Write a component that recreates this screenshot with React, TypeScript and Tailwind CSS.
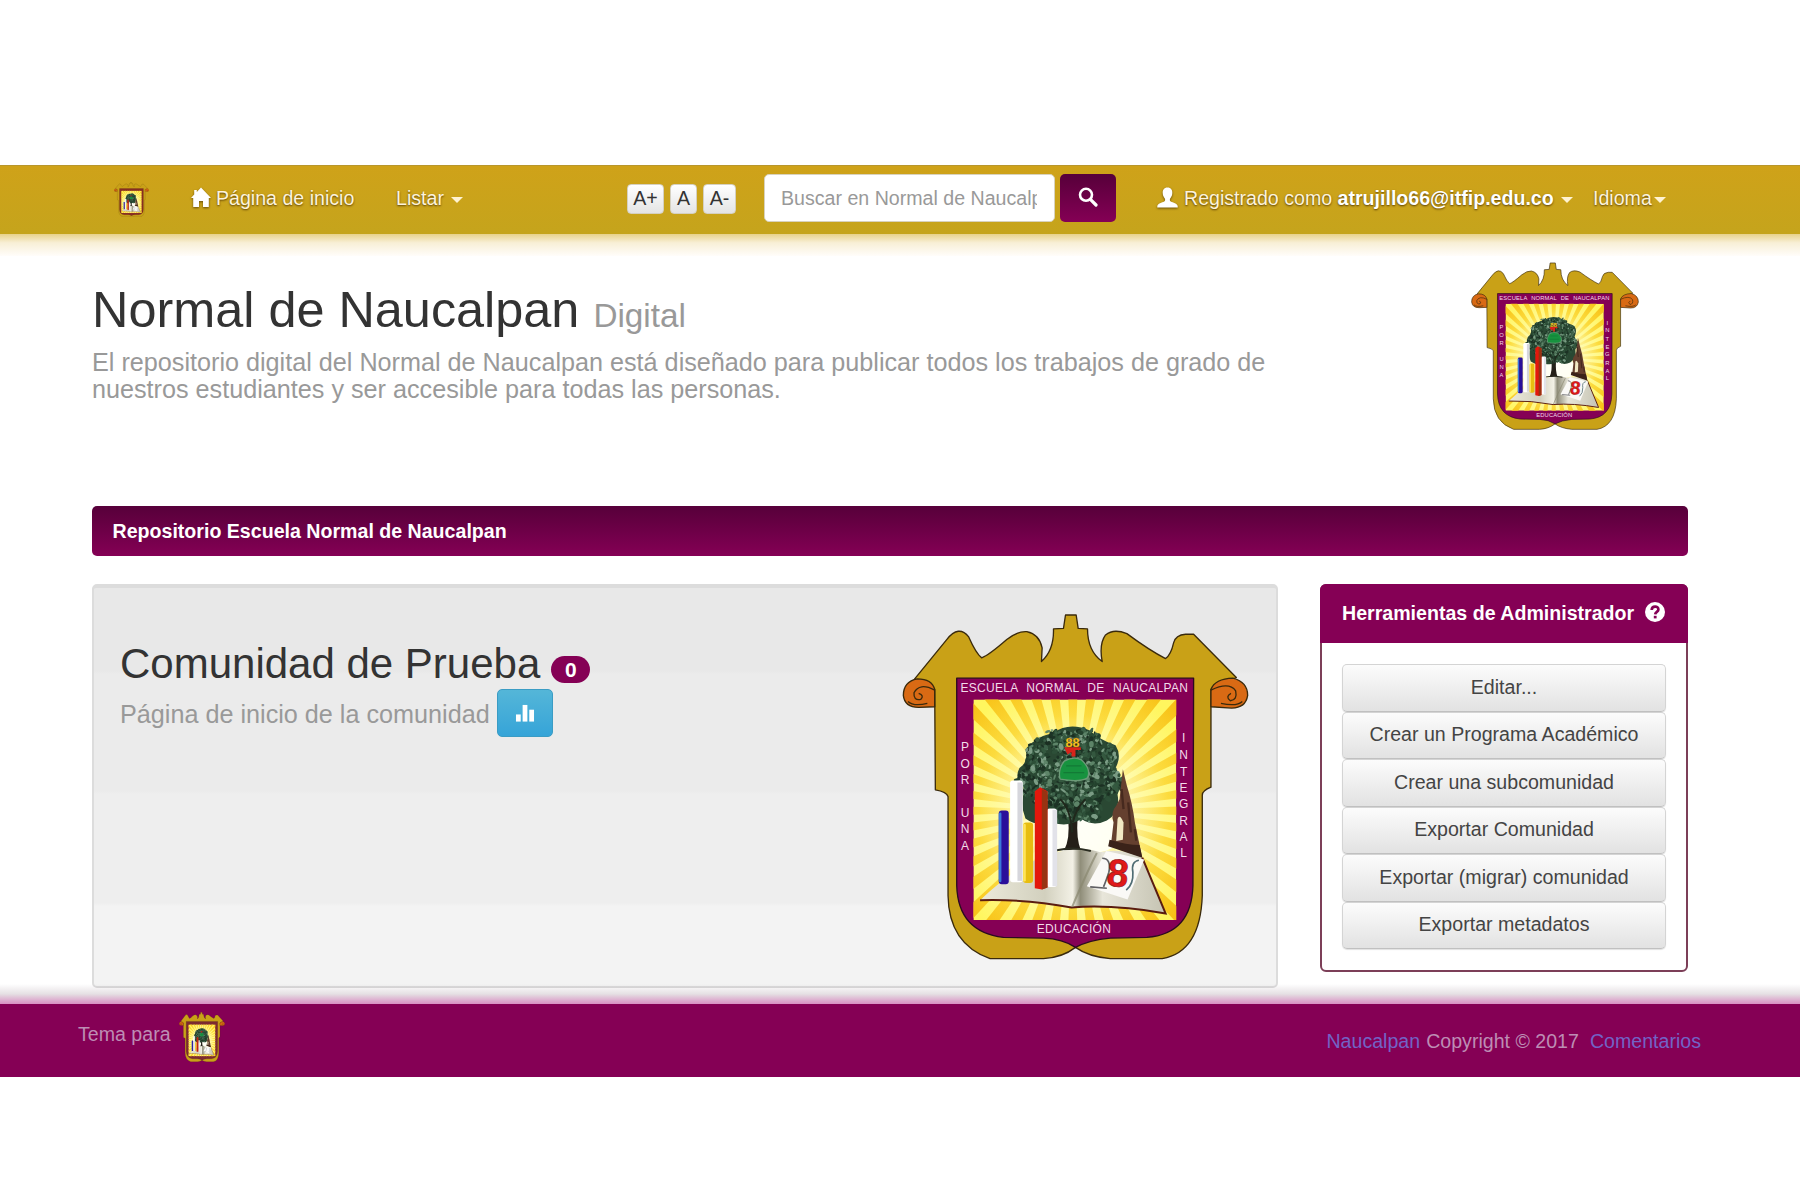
import React, { useId } from "react";

const rays = Array.from({ length: 40 }, (_, i) => {
  const a = (i * 9 * Math.PI) / 180;
  const w = 0.04;
  const r = 620;
  const p = (t: number) => `${(578 + r * Math.cos(t)).toFixed(1)},${(665 + r * Math.sin(t)).toFixed(1)}`;
  return `578,665 ${p(a - w)} ${p(a + w)}`;
});

let seed = 20177;
const rand = () => {
  seed = (seed * 48271) % 2147483647;
  return seed / 2147483647;
};

const leafTones = ["#23412d", "#3c6149", "#1d3326", "#5d8468", "#2d4f38", "#7b9c85", "#1b2f22", "#34583f"];
const leaves = Array.from({ length: 900 }, () => {
  const a = rand() * Math.PI * 2;
  const r = Math.sqrt(rand());
  return {
    x: 568 + Math.cos(a) * r * (150 + 14 * Math.sin(a * 7)),
    y: 558 + Math.sin(a) * r * (142 + 12 * Math.cos(a * 6)),
    rx: 3 + rand() * 8,
    ry: 2.5 + rand() * 5,
    t: rand() * 180,
    c: leafTones[Math.floor(rand() * leafTones.length)],
  };
});

function Column({ letters, x, ys }: { letters: string; x: number; ys: number[] }) {
  return (
    <>
      {letters.split("").map((l, i) => (
        <text key={i} x={x} y={ys[i]} textAnchor="middle">
          {l}
        </text>
      ))}
    </>
  );
}

function Crest({ className, frame = "#850055", lettering = true }: { className: string; frame?: string; lettering?: boolean }) {
  const id = useId().replace(/[^a-zA-Z0-9]/g, "");
  return (
    <svg viewBox="66 70 1040 1044" className={className} preserveAspectRatio="none">
      <defs>
        <radialGradient id={`${id}s`} cx="0.49" cy="0.53" r="0.65">
          <stop offset="0" stopColor="#fffff4" />
          <stop offset="0.35" stopColor="#fffcc0" />
          <stop offset="1" stopColor="#fff65e" />
        </radialGradient>
        <radialGradient id={`${id}r`} gradientUnits="userSpaceOnUse" cx="578" cy="665" r="480">
          <stop offset="0.25" stopColor="#fde98a" stopOpacity="0.1" />
          <stop offset="0.6" stopColor="#fbd42c" stopOpacity="0.8" />
          <stop offset="1" stopColor="#f6b80c" />
        </radialGradient>
        <linearGradient id={`${id}b`} x1="0" x2="1">
          <stop offset="0" stopColor="#eceadb" />
          <stop offset="0.35" stopColor="#d2d0be" />
          <stop offset="0.5" stopColor="#f3f1e6" />
          <stop offset="0.54" stopColor="#8f8d79" />
          <stop offset="0.66" stopColor="#e8e6da" />
          <stop offset="1" stopColor="#c5c3b2" />
        </linearGradient>
      </defs>
      <g stroke="#3a2a0c" strokeWidth="4" strokeLinejoin="round">
        <path
          fill="#c9a117"
          d="M104 268 L200 150 Q236 104 266 142 Q288 192 305 205 Q325 198 380 150 Q412 124 440 126 Q478 134 486 175 L484 216 Q522 182 520 118 L550 116 L556 76 L588 76 L594 116 L622 118 Q622 184 666 216 Q656 164 676 136 Q700 116 740 132 Q810 184 856 207 Q872 196 880 160 Q886 136 916 134 L940 134 L1068 264 L992 300 L992 594 Q966 604 966 618 L966 920 Q960 1090 846 1110 L690 1110 Q625 1104 586 1076 Q548 1106 490 1110 L330 1110 Q206 1066 204 920 L204 622 Q200 608 166 602 L164 300 Z"
        />
        <path fill="#d96a14" d="M164 300 Q156 268 112 268 Q70 276 70 318 Q74 354 116 354 L164 352 Z" />
        <path fill="none" d="M164 302 Q118 278 102 310 Q100 334 122 330 Q134 318 116 312 M84 336 Q100 352 142 342" />
        <path fill="#d96a14" d="M992 300 Q1004 268 1058 266 Q1102 278 1102 318 Q1096 356 1054 356 L992 352 Z" />
        <path fill="none" d="M992 302 Q1046 276 1066 304 Q1072 332 1050 334 Q1034 322 1052 312 M1086 336 Q1070 352 1022 342" />
        <path
          fill={frame}
          stroke="#2a0a20"
          d="M230 266 L940 266 L938 890 Q934 1036 800 1046 L690 1048 Q626 1054 586 1076 Q548 1050 490 1048 L370 1046 Q234 1030 230 890 Z"
        />
      </g>
      <svg x="280" y="330" width="608" height="664" viewBox="280 330 608 664">
        <rect x="280" y="330" width="608" height="664" fill={`url(#${id}s)`} />
        <g fill={`url(#${id}r)`}>
          {rays.map((p, i) => (
            <polygon key={i} points={p} />
          ))}
        </g>
        <ellipse cx="610" cy="735" rx="120" ry="60" fill="#fffff8" opacity="0.9" />
      </svg>
      <path d="M564 690 Q570 750 552 784 L602 784 Q588 750 592 690 Z" fill="#241f18" />
      <path
        d="M300 934 Q440 800 560 784 Q620 776 660 790 Q730 776 786 806 L856 974 Q700 946 574 956 Q440 930 300 934 Z"
        fill={`url(#${id}b)`}
      />
      <path d="M300 934 Q440 930 574 956 Q700 946 856 974 L786 806" fill="none" stroke="#5a1c10" strokeWidth="6" />
      <path d="M650 792 Q620 850 576 954" stroke="#89876f" strokeWidth="6" fill="none" opacity="0.7" />
      <path d="M530 784 Q580 772 632 786" stroke="#2a2c20" strokeWidth="6" fill="none" />
      <g>
        <path
          d="M520 430 Q568 396 630 424 Q660 452 706 468 Q726 500 706 536 Q732 572 712 616 Q722 670 680 694 Q640 714 604 690 Q560 716 520 700 Q470 714 436 688 Q416 640 436 600 Q400 570 418 536 Q446 520 436 480 Q462 444 520 430 Z"
          fill="#2a4833"
        />
        {leaves.map((l, i) => (
          <ellipse key={i} cx={l.x} cy={l.y} rx={l.rx} ry={l.ry} fill={l.c} transform={`rotate(${l.t} ${l.x} ${l.y})`} />
        ))}
        <path d="M576 730 Q572 660 540 630 M578 700 Q586 660 616 630" stroke="#20281c" strokeWidth="6" fill="none" />
      </g>
      <path d="M552 516 Q580 500 604 512 Q634 540 622 566 Q600 580 540 570 Q532 542 552 516 Z" fill="#17933f" stroke="#6c9a78" strokeWidth="4" />
      <path d="M550 550 H612 M558 530 H604" stroke="#137a36" strokeWidth="4" />
      {lettering && (
        <text
          x="577"
          y="472"
          fontSize="38"
          fontWeight="700"
          fontFamily="'Liberation Sans', sans-serif"
          fill="#ffd21f"
          stroke="#a85a12"
          strokeWidth="1"
          textAnchor="middle"
        >
          88
        </text>
      )}
      <path d="M552 474 H602 V482 H586 V502 H574 V488 L562 496 Z" fill="#d8241b" />
      <path
        d="M728 540 L740 590 Q756 640 764 700 L776 758 L786 804 Q740 790 686 768 L694 752 L700 700 Q690 670 708 650 L718 630 Z"
        fill="#65402f"
      />
      <path d="M712 690 Q718 672 730 700 L728 752 L708 756 Z" fill="#f2e9c4" />
      <path d="M688 752 Q740 768 778 768 L786 806 Q735 790 684 772 Z" fill="#3a2219" />
      <path d="M724 600 L730 660 M744 640 L752 730 M764 720 L768 755" stroke="#46291e" strokeWidth="7" />
      <g>
        <rect x="390" y="574" width="38" height="306" rx="8" fill="#ffffff" />
        <rect x="412" y="580" width="15" height="296" fill="#d6d6dc" />
        <rect x="500" y="658" width="30" height="236" rx="8" fill="#ffffff" />
        <rect x="517" y="662" width="14" height="230" fill="#e2e2e9" />
        <rect x="356" y="664" width="30" height="222" rx="9" fill="#2a0f9a" />
        <rect x="356" y="670" width="8" height="210" rx="4" fill="#3a78d8" />
        <rect x="429" y="700" width="30" height="182" rx="9" fill="#e7bd10" />
        <rect x="429" y="704" width="8" height="174" rx="4" fill="#ffe45a" />
        <path d="M464 606 L480 594 L502 606 V896 L486 902 L464 898 Z" fill="#e3180c" />
        <path d="M485 600 L502 608 V896 L485 902 Z" fill="#983312" />
      </g>
      <path d="M678 786 L792 812 L742 932 L620 892 Z" fill="#faf9f6" />
      <path d="M666 808 Q694 808 686 850 Q676 880 670 894 M630 894 L680 898" stroke="#606064" strokeWidth="5" fill="none" />
      <path d="M776 814 Q752 818 758 850 Q760 886 738 904" stroke="#4f6c74" strokeWidth="5" fill="none" />
      {lettering && (
        <g fontFamily="'Liberation Sans', sans-serif">
          <text
            x="713"
            y="893"
            fontSize="116"
            fontWeight="700"
            fill="#e01818"
            stroke="#8c1010"
            strokeWidth="2"
            textAnchor="middle"
            transform="rotate(6 713 850)"
          >
            8
          </text>
          <g fill="#f3dcea" fontSize="36">
            <text x="241" y="309" textLength="682" wordSpacing="14">
              ESCUELA NORMAL DE NAUCALPAN
            </text>
            <text x="470" y="1032" textLength="222">
              EDUCACIÓN
            </text>
            <Column letters="PORUNA" x={255} ys={[486, 535, 585, 684, 732, 782]} />
            <Column letters="INTEGRAL" x={910} ys={[459, 508, 559, 608, 657, 707, 757, 805]} />
          </g>
        </g>
      )}
    </svg>
  );
}

const HomeIcon = () => (
  <svg viewBox="0 0 20 20" className="mb-[3px] h-[21px] w-5 fill-white drop-shadow-[0_1px_1px_rgba(60,40,0,0.7)]">
    <path d="M10 0 L20 10.5 H17.8 V19.5 H12 V13.5 H8 V19.5 H2.2 V10.5 H0 L3.2 7.1 V2.5 H5.8 V4.4 Z" />
  </svg>
);

const UserIcon = () => (
  <svg viewBox="0 0 21 21" className="mb-[3px] h-[22px] w-[21px] fill-white drop-shadow-[0_1px_1px_rgba(60,40,0,0.7)]">
    <path d="M10.5 0 C14 0 15.5 2.5 15.3 5.6 C15.2 8 14.4 9.6 13.2 11 C12.6 12 12.8 13.4 13.8 14 C16 15 20.5 16.2 20.7 18.6 V20 H0.3 V18.6 C0.5 16.2 5 15 7.2 14 C8.2 13.4 8.4 12 7.8 11 C6.6 9.6 5.8 8 5.7 5.6 C5.5 2.5 7 0 10.5 0 Z" />
  </svg>
);

const SearchIcon = () => (
  <svg viewBox="0 0 20 20" className="mb-[2px] h-5 w-5">
    <circle cx="8" cy="7.8" r="6" fill="none" stroke="#fff" strokeWidth="2.6" />
    <path d="M12.4 12.4 L18 18" stroke="#fff" strokeWidth="3.2" strokeLinecap="round" />
  </svg>
);

const Caret = ({ className = "" }: { className?: string }) => (
  <span className={`h-0 w-0 shrink-0 border-x-[6px] border-t-[6px] border-x-transparent border-t-[#fff3d2] ${className}`} />
);

const navText = "text-[#fdf3dc] [text-shadow:0_1px_2px_rgba(70,45,0,0.85)]";

function FontButton({ label, className }: { label: string; className: string }) {
  return (
    <button
      className={`flex h-[30px] items-center justify-center rounded-[4px] border border-[#d5d0c0] bg-linear-to-b from-white to-[#e4e4e4] text-[19.6px] leading-none text-[#333] ${className}`}
    >
      {label}
    </button>
  );
}

const tools = [
  "Editar...",
  "Crear un Programa Académico",
  "Crear una subcomunidad",
  "Exportar Comunidad",
  "Exportar (migrar) comunidad",
  "Exportar metadatos",
];

export default function App() {
  return (
    <div className="flex h-[1200px] w-[1800px] flex-col overflow-hidden bg-white pt-[165px] font-['Liberation_Sans',Arial,sans-serif] text-[19.6px] leading-none whitespace-nowrap text-[#333]">
      <nav className="flex h-[69px] shrink-0 items-center border-t border-[#b8962c] bg-linear-to-b from-[#cfa219] to-[#c5a41c] pb-[2px] pl-[114px]">
        <Crest className="h-[35px] w-[35px]" frame="#8a2f22" lettering={false} />
        <a className={`ml-[42px] flex w-[205px] items-center gap-[5px] ${navText}`}>
          <HomeIcon />
          Página de inicio
        </a>
        <a className={`flex w-[231px] items-center gap-[7px] ${navText}`}>
          Listar
          <Caret className="mt-[2px]" />
        </a>
        <div className="flex w-[137px] gap-[6px]">
          <FontButton label="A+" className="w-[37px]" />
          <FontButton label="A" className="w-[27px]" />
          <FontButton label="A-" className="w-[33px]" />
        </div>
        <div className="mb-[2px] flex h-[48px] w-[291px] items-center rounded-[5px] border border-[#d8d2bd] bg-white pr-[17px] pl-[16px]">
          <span className="h-6 w-full overflow-hidden leading-6 text-[#999]">Buscar en Normal de Naucalpan</span>
        </div>
        <button className="mb-[2px] ml-[5px] flex h-[48px] w-[56px] items-center justify-center rounded-[5px] bg-linear-to-b from-[#57003a] to-[#850055]">
          <SearchIcon />
        </button>
        <a className={`ml-[41px] flex w-[436px] items-center ${navText}`}>
          <UserIcon />
          <span className="ml-[6px]">
            Registrado como <b className="text-white">atrujillo66@itfip.edu.co</b>
          </span>
          <Caret className="mt-[2px] ml-[7px]" />
        </a>
        <a className={`flex items-center gap-[2px] ${navText}`}>
          Idioma
          <Caret className="mt-[2px]" />
        </a>
      </nav>
      <div className="h-[22px] shrink-0 bg-linear-to-b from-[#e8d28a] via-[#f8efd6] via-40% to-[#fffdfa]" />

      <header className="flex h-[250px] shrink-0 justify-between pr-[161px] pl-[92px]">
        <div className="pt-[28px]">
          <h1 className="text-[50.4px] leading-[52px] text-[#333]">
            Normal de Naucalpan <span className="text-[33.3px] text-[#999]">Digital</span>
          </h1>
          <p className="mt-[7px] text-[25.2px] leading-[27.2px] text-[#999]">
            El repositorio digital del Normal de Naucalpan está diseñado para publicar todos los trabajos de grado de
            <br />
            nuestros estudiantes y ser accesible para todas las personas.
          </p>
        </div>
        <Crest className="mt-[6px] h-[168px] w-[168px]" />
      </header>

      <main className="h-[498px] shrink-0 px-[92px]">
        <div className="flex h-[50px] w-[1596px] items-center rounded-[5px] bg-linear-to-b from-[#57003a] to-[#850055] pt-px pl-[20.5px] font-bold text-white">
          Repositorio Escuela Normal de Naucalpan
        </div>
        <div className="mt-[28px] flex w-[1596px] justify-between">
          <section className="flex h-[404px] w-[1186px] justify-between rounded-[5px] border-2 border-t-4 border-[#dcdcdc] bg-[linear-gradient(to_bottom,#e8e8e8_0_83px,#ebebeb_86px_203px,#eeeeee_206px_315px,#f3f3f3_318px)] pr-[27px] pl-[26px]">
            <div className="pt-[53px]">
              <div className="flex items-end">
                <h2 className="text-[42px] leading-[46px]">Comunidad de Prueba</h2>
                <span className="mb-[4px] ml-[11px] flex h-[27px] w-[39px] items-center justify-center rounded-full bg-[#850055] text-[21px] font-bold text-white">
                  0
                </span>
              </div>
              <div className="mt-[2px] flex items-center text-[25.2px] text-[#999]">
                <span className="pt-[3px]">Página de inicio de la comunidad</span>
                <button className="ml-[7px] flex h-[48px] w-[56px] items-center justify-center rounded-[5px] border border-[#3a9cc4] bg-linear-to-b from-[#54b6d8] to-[#35a4d8]">
                  <svg viewBox="0 0 20 20" className="h-[19px] w-5 fill-white">
                    <rect x="0.5" y="11" width="5" height="7.5" />
                    <rect x="7.5" y="1" width="5" height="17.5" />
                    <rect x="14.5" y="6" width="5" height="12.5" />
                  </svg>
                </button>
              </div>
            </div>
            <Crest className="mt-[25px] h-[347px] w-[347px]" />
          </section>
          <aside className="h-[388px] w-[368px] rounded-[6px] border-2 border-[#7c3f58] bg-white">
            <div className="-mx-[2px] -mt-[2px] flex h-[59px] items-center rounded-t-[6px] bg-[#850055] pl-[22px] font-bold text-white">
              Herramientas de Administrador
              <svg viewBox="0 0 20 20" className="mb-[3px] ml-[11px] h-5 w-5">
                <circle cx="10" cy="10" r="10" fill="#fff" />
                <path d="M6.7 8 C6.7 3.4 13.6 3.5 13.4 7.6 C13.2 10 10.3 9.7 10.2 12.4" fill="none" stroke="#850055" strokeWidth="2.7" />
                <rect x="8.8" y="13.8" width="2.8" height="2.6" fill="#850055" />
              </svg>
            </div>
            <div className="mx-[20px] mt-[21px] flex flex-col">
              {tools.map((t) => (
                <button
                  key={t}
                  className="h-[47.5px] rounded-[5px] border border-[#d4d4d4] border-b-[#c0c0c0] bg-linear-to-b from-[#fcfcfc] to-[#e2e2e2] text-[#444] shadow-[0_1px_1px_rgba(0,0,0,0.12)]"
                >
                  {t}
                </button>
              ))}
            </div>
          </aside>
        </div>
      </main>

      <footer className="relative flex h-[73px] shrink-0 items-start justify-between bg-[#850055] pr-[99px] pl-[78px] text-[#bd8db4]">
        <div className="absolute inset-x-0 -top-[20px] h-[20px] bg-linear-to-b from-transparent via-[#5a3a5028] via-50% to-[#d98fc3]" />
        <div className="flex items-start gap-[8px]">
          <span className="mt-[21px]">Tema para</span>
          <Crest className="mt-[8px] h-[50px] w-[46px]" frame="#7d2a30" lettering={false} />
        </div>
        <div className="mt-[28px] flex">
          <a className="mr-[6px] text-[#7263c6]">Naucalpan</a>
          <span>Copyright © 2017</span>
          <a className="ml-[11px] text-[#7263c6]">Comentarios</a>
        </div>
      </footer>
    </div>
  );
}
